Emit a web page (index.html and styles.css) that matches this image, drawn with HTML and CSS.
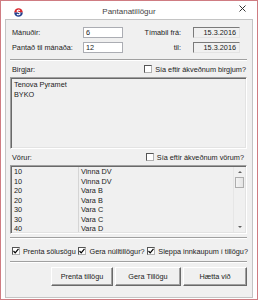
FILE: index.html
```html
<!DOCTYPE html>
<html lang="is">
<head>
  <meta charset="UTF-8" />
  <title>Pantanatillögur</title>
  <link rel="stylesheet" href="styles.css">
</head>
<body>

<div class="window">
  <div class="titlebar">
    <div class="app-icon">
      <svg width="9" height="9" viewBox="0 0 9 9">
        <path d="M0.2 4.5 A4.3 4.3 0 0 1 8.8 4.5 Z" fill="#d8262c"/>
        <path d="M0.2 4.5 A4.3 4.3 0 0 0 8.8 4.5 Z" fill="#23408f"/>
        <path d="M6 2.6 C5 1.9 3 2 3.1 3.3 C3.2 4.4 6 4.3 6 5.7 C6 7 4 7.1 2.9 6.3" fill="none" stroke="#fff" stroke-width="1.1"/>
      </svg>
    </div>
    <div class="title">Pantanatillögur</div>
    <div class="close">
      <svg width="7" height="7" viewBox="0 0 7 7">
        <path d="M0.5 0.5 L6.5 6.5 M6.5 0.5 L0.5 6.5" stroke="#333" stroke-width="1"/>
      </svg>
    </div>
  </div>

  <div class="panel">
    <div class="top-grid">
      <label class="lbl">Mánuðir:</label>
      <div class="input">6</div>
      <label class="lbl right">Tímabil frá:</label>
      <div class="readonly">15.3.2016</div>

      <label class="lbl">Pantað til mánaða:</label>
      <div class="input">12</div>
      <label class="lbl right">til:</label>
      <div class="readonly">15.3.2016</div>
    </div>

    <div class="sep"></div>

    <div class="list-head">
      <span class="lbl">Birgjar:</span>
      <span class="check-item head-check-1"><span class="box"></span>Sía eftir ákveðnum birgjum?</span>
    </div>
    <div class="listbox suppliers">
      <div class="item">Tenova Pyramet</div>
      <div class="item">BYKO</div>
    </div>

    <div class="list-head">
      <span class="lbl">Vörur:</span>
      <span class="check-item head-check-2"><span class="box"></span>Sía eftir ákveðnum vörum?</span>
    </div>
    <div class="listbox products">
      <div class="col col-num">
        <div class="item">10</div>
        <div class="item">10</div>
        <div class="item">20</div>
        <div class="item">20</div>
        <div class="item">30</div>
        <div class="item">30</div>
        <div class="item">40</div>
      </div>
      <div class="col col-name">
        <div class="item">Vinna DV</div>
        <div class="item">Vinna DV</div>
        <div class="item">Vara B</div>
        <div class="item">Vara B</div>
        <div class="item">Vara C</div>
        <div class="item">Vara C</div>
        <div class="item">Vara D</div>
      </div>
      <div class="scrollbar">
        <div class="arrow up"></div>
        <div class="thumb"></div>
        <div class="track"></div>
        <div class="arrow down"></div>
      </div>
    </div>

    <div class="sep sep-lower"></div>

    <div class="options">
      <span class="check-item"><span class="box checked"><svg width="6" height="6" viewBox="0 0 6 6"><path d="M0.5 3 L2.2 4.8 L5.5 0.8" fill="none" stroke="#000" stroke-width="1.2"/></svg></span>Prenta sölusögu</span>
      <span class="check-item"><span class="box checked"><svg width="6" height="6" viewBox="0 0 6 6"><path d="M0.5 3 L2.2 4.8 L5.5 0.8" fill="none" stroke="#000" stroke-width="1.2"/></svg></span>Gera núlltillögur?</span>
      <span class="check-item"><span class="box checked"><svg width="6" height="6" viewBox="0 0 6 6"><path d="M0.5 3 L2.2 4.8 L5.5 0.8" fill="none" stroke="#000" stroke-width="1.2"/></svg></span>Sleppa innkaupum í tillögu?</span>
    </div>

    <div class="sep sep-buttons"></div>

    <div class="buttons">
      <button class="btn btn-print">Prenta tillögu</button>
      <button class="btn btn-make">Gera Tillögu</button>
      <button class="btn btn-cancel">Hætta við</button>
    </div>
  </div>
</div>

</body>
</html>
```

FILE: styles.css
```css
body {
  margin: 0;
  font-family: "Liberation Sans", Arial, sans-serif;
  font-size: 7.3px;
  color: #222;
  background: #fff;
}

.window {
  width: 258px;
  height: 300px;
  box-sizing: border-box;
  border: 1px solid #cf7c82;
  background: #fff;
  display: flex;
  flex-direction: column;
}

.titlebar {
  height: 18px;
  flex-shrink: 0;
  display: grid;
  grid-template-columns: 1fr auto 1fr;
  align-items: center;
}

.app-icon {
  padding-left: 13px;
  height: 9px;
  margin-top: 4px;
}

.title {
  font-size: 8px;
  color: #444;
  margin-top: 3px;
}

.close {
  justify-self: end;
  padding-right: 11px;
  height: 7px;
  margin-top: -3px;
}

.panel {
  height: 279px;
  margin: 0 4px;
  box-sizing: border-box;
  border: 1px solid #c4c4c4;
  background: #f0f0f0;
  padding: 0 5px 0 4px;
  display: flex;
  flex-direction: column;
}

.lbl {
  padding-left: 2px;
  white-space: nowrap;
}

/* top fields */
.top-grid {
  display: grid;
  grid-template-columns: 73px 40px 70px 47px;
  grid-auto-rows: 11px;
  row-gap: 4px;
  align-items: center;
  padding-top: 7px;
}

.lbl.right {
  text-align: right;
  padding-right: 12px;
}

.input, .readonly {
  height: 11px;
  box-sizing: border-box;
  line-height: 9px;
  white-space: nowrap;
}

.input {
  background: #fff;
  border: 1px solid #abadb3;
  padding-left: 2px;
}

.readonly {
  border: 1px solid;
  border-color: #7a7a7a #e3e3e3 #e3e3e3 #7a7a7a;
  background: #f0f0f0;
  text-align: right;
  padding-right: 3px;
}

.sep {
  height: 0;
  border-top: 1px solid #a0a0a0;
  border-bottom: 1px solid #fff;
  margin-top: 6px;
}

/* list headers */
.list-head {
  height: 10px;
  margin-top: 3px;
  display: flex;
  justify-content: space-between;
  align-items: center;
}

.check-item {
  display: flex;
  align-items: center;
  gap: 3px;
  white-space: nowrap;
}

.head-check-1 {
  margin-right: 1px;
}

.head-check-2 {
  margin-right: 3px;
}

.box {
  width: 8px;
  height: 8px;
  box-sizing: border-box;
  border: 1px solid;
  border-color: #555 #b0b0b0 #b0b0b0 #555;
  background: #fff;
  display: flex;
  align-items: center;
  justify-content: center;
}

/* lists */
.listbox {
  box-sizing: border-box;
  border: 1px solid;
  border-color: #a0a0a0 #fff #fff #a0a0a0;
  box-shadow: inset 1px 1px 0 #696969, inset -1px -1px 0 #e3e3e3;
  background: #f0f0f0;
  margin-top: 3px;
  overflow: hidden;
}

.suppliers {
  height: 72px;
  padding: 2px 3px;
}

.suppliers .item {
  height: 9.5px;
  line-height: 9.5px;
}

.products {
  height: 69px;
  display: flex;
  padding: 1px;
}

.col .item {
  height: 9.5px;
  line-height: 9.5px;
}

.col-num {
  width: 64px;
  padding-left: 2px;
  border-right: 1px solid #d5d5d5;
}

.col-name {
  flex: 1;
  padding-left: 2px;
}

.scrollbar {
  width: 11px;
  display: flex;
  flex-direction: column;
  align-items: center;
  border-left: 1px solid #e6e6e6;
}

.arrow {
  height: 10px;
  width: 11px;
  position: relative;
}

.arrow::after {
  content: "";
  position: absolute;
  left: 4px;
  border-left: 2px solid transparent;
  border-right: 2px solid transparent;
}

.arrow.up::after {
  top: 4px;
  border-bottom: 2px solid #606060;
}

.arrow.down::after {
  top: 4px;
  border-top: 2px solid #606060;
}

.thumb {
  width: 9px;
  height: 11px;
  box-sizing: border-box;
  border: 1px solid #adadad;
  background: linear-gradient(to right, #f4f4f4, #e4e4e4);
}

.track {
  flex: 1;
}

.sep-lower {
  margin-top: 3px;
}

/* options */
.options {
  height: 10px;
  margin-top: 7px;
  padding-left: 2px;
  display: flex;
  justify-content: space-between;
  align-items: center;
  margin-right: -1px;
}

.sep-buttons {
  margin-top: 5px;
}

.buttons {
  margin-top: 4px;
  display: flex;
  justify-content: flex-end;
  gap: 2px;
}

.btn {
  height: 19px;
  font-family: "Liberation Sans", Arial, sans-serif;
  font-size: 7.3px;
  color: #222;
  background: #f0f0f0;
  border: 1px solid;
  border-color: #fff #696969 #696969 #fff;
  box-shadow: inset -1px -1px 0 #a0a0a0;
  padding: 0;
}

.btn-print {
  width: 62px;
}

.btn-make {
  width: 66px;
}

.btn-cancel {
  width: 64px;
}
```
